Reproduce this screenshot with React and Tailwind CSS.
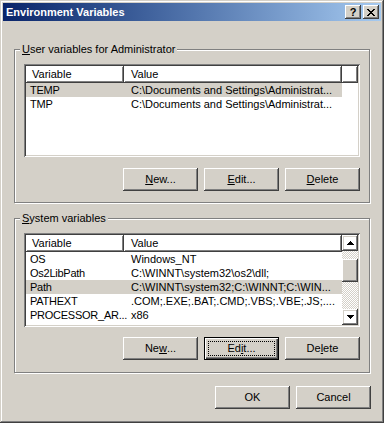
import React from 'react';

const RAISED = 'shadow-[inset_-1px_-1px_#404040,inset_1px_1px_#ffffff,inset_-2px_-2px_#808080,inset_2px_2px_#d4d0c8]';
const HEADER = 'shadow-[inset_-1px_-1px_#404040,inset_1px_1px_#ffffff,inset_-2px_-2px_#808080]';
const SUNKEN = 'shadow-[inset_1px_1px_#808080,inset_-1px_-1px_#ffffff,inset_2px_2px_#404040,inset_-2px_-2px_#d4d0c8]';

const USER_VARS = [
    { name: 'TEMP', value: 'C:\\Documents and Settings\\Administrat...', selected: true },
    { name: 'TMP', value: 'C:\\Documents and Settings\\Administrat...' },
];

const SYSTEM_VARS = [
    { name: 'OS', value: 'Windows_NT' },
    { name: 'Os2LibPath', value: 'C:\\WINNT\\system32\\os2\\dll;' },
    { name: 'Path', value: 'C:\\WINNT\\system32;C:\\WINNT;C:\\WIN...', selected: true },
    { name: 'PATHEXT', value: '.COM;.EXE;.BAT;.CMD;.VBS;.VBE;.JS;....' },
    { name: 'PROCESSOR_AR...', value: 'x86' },
];

// label with one underlined access key
const Label = ({ text, at }) => (
    <>
        {text.slice(0, at)}
        <span className="underline underline-offset-[1px]">{text[at]}</span>
        {text.slice(at + 1)}
    </>
);

const Button = ({ children, focused }) => {
    if (focused) {
        return (
            <button type="button" className="w-[75px] h-[23px] border border-black p-[3px] bg-[#d4d0c8] shadow-[inset_1px_1px_#ffffff,inset_-1px_-1px_#404040,inset_-2px_-2px_#808080]">
                <span className="flex h-full items-center justify-center border border-dotted border-black leading-none">{children}</span>
            </button>
        );
    }
    return (
        <button type="button" className={`w-[75px] h-[23px] bg-[#d4d0c8] flex items-center justify-center leading-none ${RAISED}`}>
            {children}
        </button>
    );
};

const Header = ({ withGap }) => (
    <div className="flex h-[17px] leading-[17px]">
        <div className={`w-[98px] pl-[6px] ${HEADER}`}>Variable</div>
        <div className={`w-[218px] pl-[7px] ${HEADER}`}>Value</div>
        {withGap && <div className={`flex-1 ${HEADER}`} />}
    </div>
);

const Rows = ({ items }) => (
    <div>
        {items.map((v) => (
            <div key={v.name} className={`flex h-[14px] leading-[14px] w-[316px] whitespace-nowrap ${v.selected ? 'bg-[#d4d0c8]' : ''}`}>
                <div className="w-[98px] pl-[4px] tracking-[-0.25px]">{v.name}</div>
                <div className="w-[218px] pl-[7px] overflow-hidden">{v.value}</div>
            </div>
        ))}
    </div>
);

const Arrow = ({ down }) => (
    <svg width="7" height="4" viewBox="0 0 7 4" className={down ? 'rotate-180' : ''}>
        <path d="M3 0h1v1h1v1h1v1h1v1H0V3h1V2h1V1h1z" fill="#000" />
    </svg>
);

const ScrollBar = () => (
    <div className="w-[16px] flex flex-col">
        <div className={`h-[16px] flex items-center justify-center ${RAISED}`}><Arrow /></div>
        <div className="flex-1 pt-[8px] bg-[repeating-conic-gradient(#ffffff_0_25%,#d4d0c8_0_50%)] bg-[length:2px_2px]">
            <div className={`h-[23px] bg-[#d4d0c8] ${RAISED}`} />
        </div>
        <div className={`h-[16px] flex items-center justify-center ${RAISED}`}><Arrow down /></div>
    </div>
);

const Group = ({ legend, children, className }) => (
    <fieldset className={`m-0 ml-[11px] mr-[11px] border border-[#808080] pl-[5px] pr-[9px] shadow-[inset_1px_1px_#ffffff,1px_1px_#ffffff] ${className}`}>
        <legend className="bg-[#d4d0c8] px-[2px] leading-[13px]">{legend}</legend>
        {children}
    </fieldset>
);

export default function App() {
    return (
        <div className="w-[384px] h-[423px] bg-[#d4d0c8] p-[3px] text-[11px] text-black font-['Liberation_Sans',Arial,sans-serif] shadow-[inset_-1px_-1px_#404040,inset_1px_1px_#d4d0c8,inset_-2px_-2px_#808080,inset_2px_2px_#ffffff]">
            {/* title bar */}
            <div className="h-[18px] flex items-center justify-between pl-[3px] pr-[2px] bg-gradient-to-r from-[#0a246a] to-[#a6caf0]">
                <span className="text-white font-bold">Environment Variables</span>
                <div className="flex gap-[2px]">
                    <button type="button" className={`w-[16px] h-[14px] bg-[#d4d0c8] flex items-center justify-center font-bold text-[11px] leading-none ${RAISED}`}>?</button>
                    <button type="button" className={`w-[16px] h-[14px] bg-[#d4d0c8] flex items-center justify-center ${RAISED}`}>
                        <svg width="8" height="7" viewBox="0 0 8 7">
                            <path d="M0 0h2v1h1v1h2V1h1V0h2v1H7v1H6v1H5v1h1v1h1v1h1v1H6V6H5V5H3v1H2v1H0V6h1V5h1V4h1V3H2V2H1V1H0z" fill="#000" />
                        </svg>
                    </button>
                </div>
            </div>

            <Group legend={<Label text="User variables for Administrator" at={0} />} className="mt-[22px] pb-[11px]">
                <div className={`mt-[8px] ml-[4px] h-[93px] bg-white p-[2px] ${SUNKEN}`}>
                    <Header withGap />
                    <Rows items={USER_VARS} />
                </div>
                <div className="mt-[11px] flex justify-end gap-[6px]">
                    <Button><Label text="New..." at={0} /></Button>
                    <Button><Label text="Edit..." at={0} /></Button>
                    <Button><Label text="Delete" at={0} /></Button>
                </div>
            </Group>

            <Group legend={<Label text="System variables" at={0} />} className="mt-[9px] pb-[12px]">
                <div className={`mt-[8px] ml-[4px] h-[94px] bg-white p-[2px] flex ${SUNKEN}`}>
                    <div className="flex-1 overflow-hidden">
                        <Header />
                        <Rows items={SYSTEM_VARS} />
                    </div>
                    <ScrollBar />
                </div>
                <div className="mt-[10px] flex justify-end gap-[6px]">
                    <Button><Label text="New..." at={2} /></Button>
                    <Button focused><Label text="Edit..." at={2} /></Button>
                    <Button><Label text="Delete" at={2} /></Button>
                </div>
            </Group>

            <div className="mt-[13px] mr-[10px] flex justify-end gap-[6px]">
                <Button>OK</Button>
                <Button>Cancel</Button>
            </div>
        </div>
    );
}
